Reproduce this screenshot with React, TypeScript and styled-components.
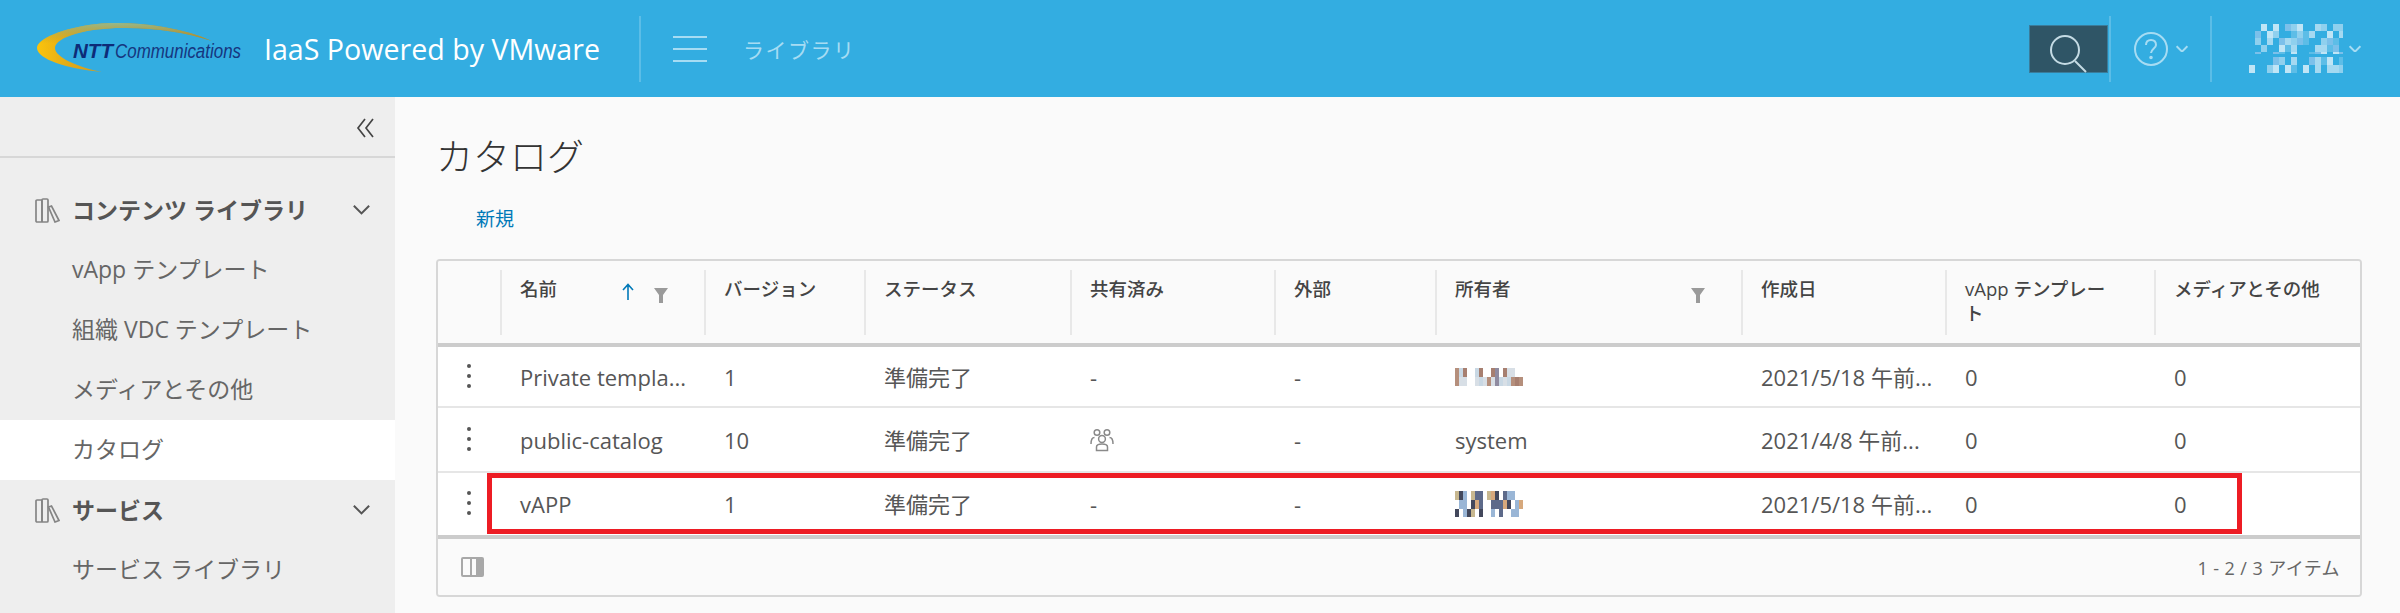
import React from 'react'
import styled, { createGlobalStyle } from 'styled-components'

const FONT = `"Open Sans", "Noto Sans CJK JP", sans-serif`
const COLUMNS = '62px 204px 160px 206px 204px 161px 306px 204px 209px 1fr'

const GlobalStyle = createGlobalStyle`
    html, body {
        margin: 0;
        padding: 0;
        height: 613px;
        overflow: hidden;
        background: #fafafa;
        font-family: ${FONT};
    }
`

type MosaicProps = {
    width: number
    height: number
    cellW: number
    cellH: number
    seed: number
    palette: string[]
}

// scrambled user names in the screenshot
function Mosaic({ width, height, cellW, cellH, seed, palette }: MosaicProps) {
    const rects = []
    let n = seed
    for (let y = 0; y < height; y += cellH) {
        for (let x = 0; x < width; x += cellW) {
            n = (n * 137 + 71) % 1009
            rects.push(<rect key={`${x}-${y}`} x={x} y={y} width={cellW} height={cellH} fill={palette[n % palette.length]} />)
        }
    }
    return (
        <svg width={width} height={height} style={{ display: 'block' }}>
            {rects}
        </svg>
    )
}

const SWOOSH = 'M175 20 C140 4 90 0 60 3 C25 7 0 18 0 27 C0 38 30 48 65 51 C40 46 18 36 18 27 C18 15 55 6 90 7 C120 7 150 12 175 20 Z'

const Logo = () => (
    <svg width="230" height="54" viewBox="0 0 230 54" style={{ display: 'block' }}>
        <defs>
            <linearGradient id="swoosh" x1="0" y1="0" x2="1" y2="0">
                <stop offset="0" stopColor="#fbc40c" />
                <stop offset="0.2" stopColor="#e0a818" />
                <stop offset="0.6" stopColor="#b8892a" />
                <stop offset="1" stopColor="#a98a2e" />
            </linearGradient>
            <linearGradient id="swooshTop" x1="0" y1="0" x2="0" y2="1">
                <stop offset="0" stopColor="#93b98e" />
                <stop offset="0.42" stopColor="#c29a26" stopOpacity="0" />
            </linearGradient>
        </defs>
        <path d={SWOOSH} fill="url(#swoosh)" />
        <path d={SWOOSH} fill="url(#swooshTop)" />
        <text x="36" y="37" fontFamily="Liberation Sans" fontWeight="700" fontStyle="italic" fontSize="21" fill="#0d2b78" textLength="40" lengthAdjust="spacingAndGlyphs">NTT</text>
        <text x="78" y="37" fontFamily="Liberation Sans" fontStyle="italic" fontSize="20" fill="#16367f" textLength="126" lengthAdjust="spacingAndGlyphs">Communications</text>
    </svg>
)

const SearchIcon = () => (
    <svg width="44" height="44" viewBox="0 0 44 44" fill="none" stroke="#c4dbe4" strokeWidth="2">
        <circle cx="18" cy="18" r="14" />
        <path d="M28 29 L39 40" />
    </svg>
)

const HelpIcon = () => (
    <svg width="34" height="34" viewBox="0 0 34 34" fill="none" stroke="#a6dcf3" strokeWidth="2">
        <circle cx="17" cy="17" r="16" />
        <path d="M12 13 C12 9 15 8 17 8 C20 8 22 10 22 13 C22 16 17 17 17 21" />
        <circle cx="17" cy="25.5" r="0.8" fill="#a6dcf3" />
    </svg>
)

const Chevron = ({ size = 12, color = '#a6dcf3', width = 2 }: { size?: number; color?: string; width?: number }) => (
    <svg width={size} height={size * 0.65} viewBox="0 0 20 13" fill="none" stroke={color} strokeWidth={(width * 20) / size}>
        <path d="M1 2 L10 11 L19 2" />
    </svg>
)

const BooksIcon = () => (
    <svg width="25" height="25" viewBox="0 0 25 25" fill="none" stroke="#858585" strokeWidth="1.7">
        <rect x="1" y="2" width="6" height="22" rx="1" />
        <rect x="7" y="1" width="6" height="23" rx="1" />
        <path d="M13.500 9 L16.500 8 L24 22.500 L20 24 Z" />
    </svg>
)

const SortArrow = () => (
    <svg width="12" height="18" viewBox="0 0 12 18" fill="none" stroke="#0079b8" strokeWidth="1.6">
        <path d="M6 17 L6 2 M1 7 L6 1.5 L11 7" />
    </svg>
)

const FilterIcon = () => (
    <svg width="14" height="15" viewBox="0 0 14 15" fill="#9a9a9a">
        <path d="M0 0 H14 L9 7 V15 H5 V7 Z" />
    </svg>
)

const UsersIcon = () => (
    <svg width="24" height="24" viewBox="0 0 24 24" fill="none" stroke="#8a8a8a" strokeWidth="1.5" style={{ display: 'block' }}>
        <circle cx="7" cy="4.500" r="2.800" />
        <circle cx="17" cy="4.500" r="2.800" />
        <circle cx="12" cy="11" r="3.400" />
        <path d="M6.500 22.500 V19 C6.500 17 9 16 12 16 C15 16 17.500 17 17.500 19 V22.500 Z" />
        <path d="M1 16 C1 12 2.500 9.500 4.500 9.500 M23 16 C23 12 21.500 9.500 19.500 9.500" />
    </svg>
)

const ColumnsIcon = () => (
    <svg width="23" height="20" viewBox="0 0 23 20" style={{ display: 'block' }}>
        <rect x="1" y="1" width="21" height="18" rx="1" fill="none" stroke="#a8a8a8" strokeWidth="2" />
        <rect x="9" y="1" width="2" height="18" fill="#a8a8a8" />
        <rect x="15" y="1" width="7" height="18" fill="#a8a8a8" />
    </svg>
)

const CollapseIcon = () => (
    <svg width="20" height="20" viewBox="0 0 20 20" fill="none" stroke="#444" strokeWidth="1.7" style={{ display: 'block' }}>
        <path d="M9 1 L2 10 L9 19 M17 1 L10 10 L17 19" />
    </svg>
)

const USER_PALETTE = ['#33ade1', '#33ade1', '#8fd0ee', '#c0e5f6', '#5dbde7', '#33ade1', '#a5d9f1', '#7cc0ea']
const OWNER_PALETTE_A = ['#b58f7c', '#8f8ba0', '#d8dfe6', '#ffffff', '#a77f70', '#ffffff', '#c9d8e4']
const OWNER_PALETTE_B = ['#5d6a8a', '#c7b78f', '#ffffff', '#9ab6d6', '#43485c', '#ffffff', '#d6a87c']

const rows = [
    { name: 'Private templa...', version: '1', shared: '-', owner: 'a', date: '2021/5/18 午前...', height: 61 },
    { name: 'public-catalog', version: '10', shared: 'icon', owner: 'system', date: '2021/4/8 午前...', height: 65 },
    { name: 'vAPP', version: '1', shared: '-', owner: 'b', date: '2021/5/18 午前...', height: 66, marked: true },
]

const headers = [
    { label: '名前', sort: true, filter: true },
    { label: 'バージョン' },
    { label: 'ステータス' },
    { label: '共有済み' },
    { label: '外部' },
    { label: '所有者', filter: true },
    { label: '作成日' },
    { label: 'vApp テンプレート' },
    { label: 'メディアとその他' },
]

function App() {
    return (
        <Root>
            <GlobalStyle />
            <Header>
                <LogoSlot>
                    <Logo />
                </LogoSlot>
                <Product>IaaS Powered by VMware</Product>
                <HeaderDivider />
                <Hamburger>
                    <span />
                    <span />
                    <span />
                </Hamburger>
                <HeaderLink>ライブラリ</HeaderLink>
                <HeaderRight>
                    <SearchBox>
                        <SearchIcon />
                    </SearchBox>
                    <HeaderDivider />
                    <HelpBlock>
                        <HelpIcon />
                        <Chevron />
                    </HelpBlock>
                    <HeaderDivider />
                    <UserBlock>
                        <UserNames>
                            <Mosaic width={88} height={30} cellW={6} cellH={7} seed={11} palette={USER_PALETTE} />
                            <Mosaic width={94} height={16} cellW={6} cellH={8} seed={43} palette={USER_PALETTE} />
                        </UserNames>
                        <Chevron />
                    </UserBlock>
                </HeaderRight>
            </Header>
            <Body>
                <Sidebar>
                    <CollapseRow>
                        <CollapseIcon />
                    </CollapseRow>
                    <Nav>
                        <GroupRow>
                            <BooksIcon />
                            <GroupLabel>コンテンツ ライブラリ</GroupLabel>
                            <Chevron size={17} color="#555" width={2} />
                        </GroupRow>
                        <NavItem>vApp テンプレート</NavItem>
                        <NavItem>組織 VDC テンプレート</NavItem>
                        <NavItem>メディアとその他</NavItem>
                        <NavItem active>カタログ</NavItem>
                        <GroupRow>
                            <BooksIcon />
                            <GroupLabel>サービス</GroupLabel>
                            <Chevron size={17} color="#555" width={2} />
                        </GroupRow>
                        <NavItem>サービス ライブラリ</NavItem>
                    </Nav>
                </Sidebar>
                <Main>
                    <Title>カタログ</Title>
                    <NewLink>新規</NewLink>
                    <Table>
                        <HeadRow>
                            <HeadCell />
                            {headers.map((h) => (
                                <HeadCell key={h.label}>
                                    <HeadLabel>{h.label}</HeadLabel>
                                    {h.sort && (
                                        <SortSlot>
                                            <SortArrow />
                                        </SortSlot>
                                    )}
                                    {h.filter && (
                                        <FilterSlot>
                                            <FilterIcon />
                                        </FilterSlot>
                                    )}
                                </HeadCell>
                            ))}
                        </HeadRow>
                        {rows.map((r) => (
                            <Row key={r.name} rowHeight={r.height} last={r.marked}>
                                <KebabCell>
                                    <Kebab>
                                        <i />
                                        <i />
                                        <i />
                                    </Kebab>
                                </KebabCell>
                                <Cell>{r.name}</Cell>
                                <Cell>{r.version}</Cell>
                                <Cell>準備完了</Cell>
                                <Cell>{r.shared === 'icon' ? <UsersIcon /> : r.shared}</Cell>
                                <Cell>-</Cell>
                                <Cell>
                                    {r.owner === 'a' && <Mosaic width={68} height={18} cellW={4} cellH={9} seed={7} palette={OWNER_PALETTE_A} />}
                                    {r.owner === 'b' && <Mosaic width={68} height={26} cellW={4} cellH={9} seed={29} palette={OWNER_PALETTE_B} />}
                                    {r.owner === 'system' && 'system'}
                                </Cell>
                                <Cell>{r.date}</Cell>
                                <Cell>0</Cell>
                                <Cell>0</Cell>
                                {r.marked && <Highlight />}
                            </Row>
                        ))}
                        <Footer>
                            <ColumnsIcon />
                            <Pagination>1 - 2 / 3 アイテム</Pagination>
                        </Footer>
                    </Table>
                </Main>
            </Body>
        </Root>
    )
}

const Root = styled.div`
    width: 2400px;
    height: 613px;
    display: flex;
    flex-direction: column;
    overflow: hidden;
`

const Header = styled.header`
    height: 97px;
    flex: none;
    display: flex;
    align-items: center;
    padding-left: 37px;
    background: #33ade1;
    color: #ffffff;
`

const LogoSlot = styled.div`
    width: 206px;
    height: 54px;
    margin-top: -2px;
`

const Product = styled.div`
    margin-left: 21px;
    width: 375px;
    font-size: 28.6px;
    line-height: 36px;
    white-space: nowrap;
`

const HeaderDivider = styled.div`
    width: 2px;
    height: 66px;
    flex: none;
    background: rgba(255, 255, 255, 0.2);
`

const Hamburger = styled.div`
    width: 34px;
    height: 26px;
    margin-left: 32px;
    display: flex;
    flex-direction: column;
    justify-content: space-between;

    span {
        display: block;
        height: 2px;
        background: #a6dcf3;
    }
`

const HeaderLink = styled.div`
    margin-left: 36px;
    font-size: 21px;
    letter-spacing: 1.5px;
    color: #a6dcf3;
`

const HeaderRight = styled.div`
    margin-left: auto;
    display: flex;
    align-items: center;
`

const SearchBox = styled.div`
    width: 79px;
    height: 48px;
    padding: 6px 0 0 17px;
    box-sizing: border-box;
    margin-right: 1px;
    background: #2f5566;
    border: 1px solid #3a7c9b;
`

const HelpBlock = styled.div`
    width: 99px;
    padding-left: 23px;
    box-sizing: border-box;
    display: flex;
    align-items: center;
    gap: 8px;
`

const UserBlock = styled.div`
    width: 188px;
    padding-left: 37px;
    box-sizing: border-box;
    display: flex;
    align-items: center;
    gap: 6px;
`

const UserNames = styled.div`
    display: flex;
    flex-direction: column;
    align-items: flex-end;
    gap: 3px;
`

const Body = styled.div`
    flex: 1;
    display: flex;
    min-height: 0;
`

const Sidebar = styled.aside`
    width: 395px;
    flex: none;
    background: #eeeeee;
`

const CollapseRow = styled.div`
    height: 61px;
    box-sizing: border-box;
    padding: 21px 19px 0 0;
    display: flex;
    justify-content: flex-end;
    border-bottom: 2px solid #d7d7d7;
`

const Nav = styled.nav`
    padding-top: 22px;
`

const GroupRow = styled.div`
    height: 60px;
    padding: 0 25px 0 35px;
    display: flex;
    align-items: center;
`

const GroupLabel = styled.div`
    flex: 1;
    margin-left: 12px;
    margin-top: -2px;
    font-size: 23px;
    font-weight: 700;
    color: #555555;
`

type NavItemProps = {
    active?: boolean
}

const NavItem = styled.div<NavItemProps>`
    height: 60px;
    line-height: 58px;
    padding-left: 72px;
    font-size: 23px;
    color: #666666;
    background: ${(props) => (props.active ? '#ffffff' : 'transparent')};
`

const Main = styled.main`
    flex: 1;
    min-width: 0;
    padding: 36px 38px 0 41px;
`

const Title = styled.h1`
    margin: 0;
    font-size: 37px;
    line-height: 48px;
    font-weight: 300;
    color: #333333;
`

const NewLink = styled.div`
    margin: 25px 0 0 40px;
    font-size: 19px;
    line-height: 26px;
    color: #0079b8;
`

const Table = styled.div`
    margin-top: 27px;
    height: 338px;
    box-sizing: border-box;
    display: flex;
    flex-direction: column;
    background: #ffffff;
    border: 2px solid #d7d7d7;
    border-radius: 4px;
    overflow: hidden;
`

const HeadRow = styled.div`
    height: 86px;
    flex: none;
    box-sizing: border-box;
    display: grid;
    grid-template-columns: ${COLUMNS};
    background: #fafafa;
    border-bottom: 4px solid #cccccc;
`

const HeadCell = styled.div`
    position: relative;
    padding: 16px 34px 0 20px;
    font-size: 18.5px;
    line-height: 24px;
    font-weight: 500;
    color: #444444;

    & + &::before {
        content: '';
        position: absolute;
        left: 0;
        top: 9px;
        width: 2px;
        height: 65px;
        background: #e8e8e8;
    }
`

const HeadLabel = styled.span`
    word-break: break-all;
`

const SortSlot = styled.span`
    position: absolute;
    left: 122px;
    top: 21px;
`

const FilterSlot = styled.span`
    position: absolute;
    right: 36px;
    top: 23px;
`

type RowProps = {
    rowHeight: number
    last?: boolean
}

const Row = styled.div<RowProps>`
    position: relative;
    flex: none;
    height: ${(props) => props.rowHeight}px;
    box-sizing: border-box;
    display: grid;
    grid-template-columns: ${COLUMNS};
    align-items: center;
    border-bottom: ${(props) => (props.last ? '4px solid #cccccc' : '2px solid #e6e6e6')};
`

const Cell = styled.div`
    padding-left: 20px;
    font-size: 22px;
    line-height: 30px;
    color: #565656;
    white-space: nowrap;
    overflow: hidden;
`

const KebabCell = styled.div`
    display: flex;
    justify-content: center;
`

const Kebab = styled.div`
    display: flex;
    flex-direction: column;
    gap: 6px;
    margin-top: -2px;

    i {
        display: block;
        width: 4px;
        height: 4px;
        border-radius: 50%;
        background: #555555;
    }
`

const Highlight = styled.div`
    position: absolute;
    left: 49px;
    top: 0;
    width: 1755px;
    height: 61px;
    box-sizing: border-box;
    border: 5px solid #ed1c24;
    pointer-events: none;
`

const Footer = styled.div`
    flex: 1;
    display: flex;
    align-items: center;
    justify-content: space-between;
    padding: 0 20px 0 23px;
    background: #fafafa;
`

const Pagination = styled.div`
    font-size: 18px;
    letter-spacing: 0.4px;
    color: #666666;
`

export default App
